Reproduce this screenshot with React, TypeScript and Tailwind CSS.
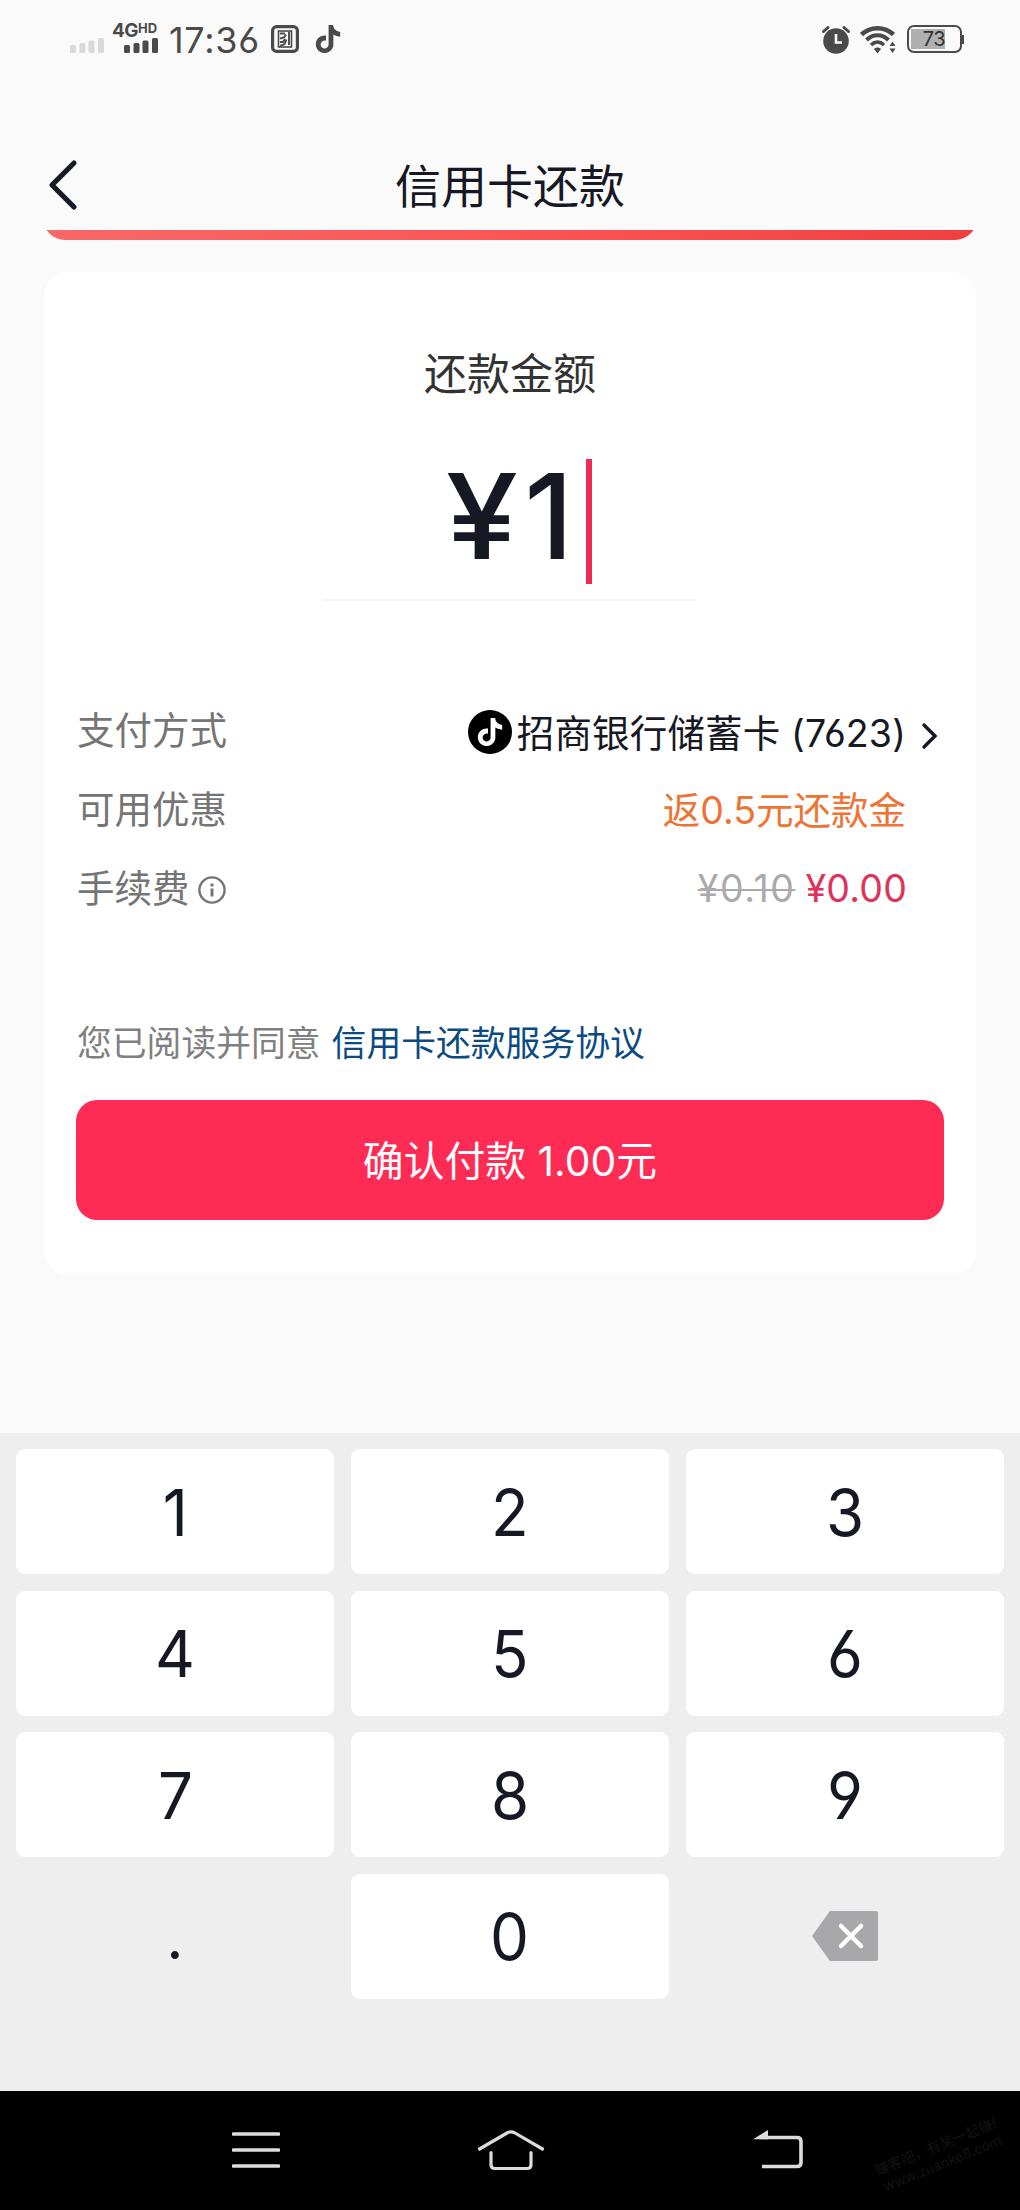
import { useState } from 'react';
import type { ReactNode } from 'react';

const DIGIT_KEYS = ['1', '2', '3', '4', '5', '6', '7', '8', '9'];

const NOTE_PATH =
  'M12.525.02c1.31-.02 2.61-.01 3.91-.02.08 1.53.63 3.09 1.75 4.17 1.12 1.11 2.7 1.62 4.24 1.79v4.03c-1.44-.05-2.89-.35-4.2-.97-.57-.26-1.1-.59-1.62-.93-.01 2.92.01 5.84-.02 8.75-.08 1.4-.54 2.79-1.35 3.94-1.31 1.92-3.58 3.17-5.91 3.21-1.43.08-2.86-.31-4.08-1.03-2.02-1.19-3.44-3.37-3.65-5.71-.02-.5-.03-1-.01-1.49.18-1.9 1.12-3.72 2.58-4.96 1.66-1.44 3.98-2.13 6.15-1.72.02 1.48-.04 2.96-.04 4.44-.99-.32-2.15-.23-3.02.37-.63.41-1.11 1.04-1.36 1.75-.21.51-.15 1.07-.14 1.61.24 1.64 1.82 3.02 3.5 2.87 1.12-.01 2.19-.66 2.77-1.61.19-.33.4-.67.41-1.06.1-1.79.06-3.57.07-5.36.01-4.03-.01-8.05.02-12.07z';

function SignalBars({ className }: { className?: string }) {
  return (
    <svg className={className} width="34" height="15" viewBox="0 0 34 15" fill="currentColor">
      <rect x="0" y="7" width="6" height="8" rx="1.5" />
      <rect x="9.5" y="5" width="6" height="10" rx="1.5" />
      <rect x="18.5" y="2.5" width="6" height="12.5" rx="1.5" />
      <rect x="28" y="0" width="6" height="15" rx="1.5" />
    </svg>
  );
}

function StatusBar() {
  return (
    <div className="flex h-20 items-start justify-between pl-[70px] pr-[56px] text-[#4a4a4a]">
      <div className="flex items-start">
        <SignalBars className="mt-[38px] text-[#d9d9d9]" />
        <div className="ml-2 flex w-[46px] flex-col items-end pt-[23px]">
          <div className="flex h-[15px] w-full items-start font-bold leading-none">
            <span className="text-[19px] leading-[15px] tracking-[-0.5px]">4G</span>
            <span className="text-[13px] leading-[11px]">HD</span>
          </div>
          <SignalBars />
        </div>
        <span className="ml-[11px] mt-[20px] w-[91px] whitespace-nowrap text-[36px] leading-[40px] tracking-[0.7px]">
          17:36
        </span>
        <svg className="ml-[11px] mt-[25px]" width="28" height="28" viewBox="0 0 28 28" fill="none">
          <rect x="1.6" y="1.6" width="24.8" height="24.8" rx="4" stroke="currentColor" strokeWidth="3.2" />
          <rect x="7.5" y="6" width="13" height="16" stroke="currentColor" strokeWidth="1.6" />
          <path d="M9 8.5h5M18 7v13M9 13.5l4-1 2-3M9 17h3l2-3M9 20.5c4 0 6-2 6-6" stroke="currentColor" strokeWidth="1.9" />
        </svg>
        <svg className="ml-[15px] mt-[25px]" width="28" height="28" viewBox="0 0 24 24" fill="currentColor">
          <path d={NOTE_PATH} />
        </svg>
      </div>

      <div className="flex items-start pt-[25px]">
        <svg width="28" height="29" viewBox="0 0 28 29" fill="none">
          <circle cx="14" cy="16" r="12.8" fill="currentColor" />
          <path d="M1.5 6.5 6 2.5M26.5 6.5 22 2.5" stroke="currentColor" strokeWidth="3" strokeLinecap="round" />
          <path d="M14 9v8.5h6" stroke="#fafafa" strokeWidth="2.6" />
        </svg>
        <svg className="ml-[10px]" width="37" height="29" viewBox="0 0 37 29" fill="none" stroke="currentColor">
          <path d="M1.5 9.5C10.5 1 24.5 1 33.5 9.5" strokeWidth="4.5" />
          <path d="M6.5 15C13 8.5 22 8.5 28.5 15" strokeWidth="4" />
          <path d="M11 20c4-3.8 9-3.8 13 0" strokeWidth="3.6" />
          <path d="M14 24c2-2 5-2 7 0l-3.5 4.5z" fill="currentColor" stroke="none" />
          <path d="M29.5 21l3-4.5 3 4.5zM29.5 23.5l3 4.5 3-4.5z" fill="currentColor" stroke="none" />
        </svg>
        <div className="ml-[10px] flex items-center">
          <div className="flex h-7 w-[55px] items-center rounded-[7px] border-[2.5px] border-current p-[2px]">
            <div className="flex h-full w-[34px] items-center justify-end bg-[#b0b0b0] text-[20px] leading-none tracking-[-0.5px] text-[#333]">
              73
            </div>
          </div>
          <div className="h-[9px] w-[2px] bg-current" />
        </div>
      </div>
    </div>
  );
}

function DetailRow({ label, children }: { label: ReactNode; children: ReactNode }) {
  return (
    <div className="flex h-[79px] items-center justify-between">
      <div className="flex items-center pl-px text-[37.5px] text-[#757575]">{label}</div>
      <div className="flex items-center text-[37.5px]">{children}</div>
    </div>
  );
}

function Key({ label, onPress }: { label: string; onPress: (key: string) => void }) {
  return (
    <button
      onClick={() => onPress(label)}
      className="flex h-[125px] items-center justify-center rounded-[9px] bg-white pt-[1px] text-[65px] leading-none"
    >
      <span className="scale-x-95">{label}</span>
    </button>
  );
}

function Keypad({ onPress, onDelete }: { onPress: (key: string) => void; onDelete: () => void }) {
  return (
    <div className="h-[658px] bg-[#eeeeee] px-4 pt-4 text-[#161823]">
      <div className="grid grid-cols-3 gap-x-[17px] gap-y-[16.6px]">
        {DIGIT_KEYS.map((key) => (
          <Key key={key} label={key} onPress={onPress} />
        ))}
        <button onClick={() => onPress('.')} className="flex items-center justify-center pt-[2px] text-[60px] leading-none">
          .
        </button>
        <Key label="0" onPress={onPress} />
        <button onClick={onDelete} className="flex items-center justify-center">
          <svg width="66" height="50" viewBox="0 0 66 50" fill="none">
            <path d="M18 0h46a2 2 0 0 1 2 2v46a2 2 0 0 1-2 2H18L0 25z" fill="#a8a8aa" />
            <path d="M29 15l20 20M49 15L29 35" stroke="#fff" strokeWidth="4.5" strokeLinecap="round" />
          </svg>
        </button>
      </div>
    </div>
  );
}

function NavBar() {
  return (
    <div className="relative h-[119px] bg-black text-[#dcdcdc]">
      <div className="flex items-start pl-[232px] pt-[38px]">
        <svg width="48" height="42" viewBox="0 0 48 42" stroke="currentColor" strokeWidth="3.6" strokeLinecap="round">
          <path d="M1.5 5h45M1.5 21h45M1.5 37h45" />
        </svg>
        <svg
          className="ml-[197px]"
          width="68"
          height="42"
          viewBox="0 0 68 42"
          fill="none"
          stroke="currentColor"
          strokeWidth="3.2"
          strokeLinecap="round"
          strokeLinejoin="round"
        >
          <path d="M2.5 20 30 4q4-2.4 8 0L65.5 20" />
          <path d="M14 23.5V36q0 3.5 4 3.5h32q4 0 4-3.5V23.5" />
        </svg>
        <svg className="ml-[208px]" width="50" height="42" viewBox="0 0 50 42" fill="none">
          <path d="M8 8.5h36q4 0 4 4v21q0 4-4 4H9" stroke="currentColor" strokeWidth="3.6" />
          <path d="M0 10.3 15 1v9.3z" fill="currentColor" />
        </svg>
      </div>
      {/* Watermark */}
      <div className="absolute right-[16px] top-[46px] -rotate-[22deg] whitespace-pre-line text-center text-[14px] leading-[18px] text-[#131313]">
        {'赚客吧，有奖一起赚!\nwww.zuanke8.com'}
      </div>
    </div>
  );
}

export default function App() {
  const [amount, setAmount] = useState('1');

  const handlePress = (key: string) => {
    if (key === '.' && amount.includes('.')) return;
    setAmount((prev) => prev + key);
  };

  return (
    <div className="h-[2210px] w-[1020px] overflow-hidden bg-[#fafafa] font-['Inter','Noto_Sans_CJK_SC',sans-serif] text-[#161823] [font-feature-settings:'cv03','cv04']">
      <StatusBar />

      {/* Title */}
      <header className="grid h-[150px] grid-cols-[1fr_auto_1fr] items-center pt-[62px] pl-[47px] pr-[47px]">
        <svg className="mt-[-3px]" width="32" height="52" viewBox="0 0 32 52" fill="none">
          <path d="M27 4 5 26l22 22" stroke="currentColor" strokeWidth="5.2" strokeLinecap="round" strokeLinejoin="round" />
        </svg>
        <h1 className="text-[46px] leading-[60px]">信用卡还款</h1>
      </header>

      {/* Bottom edge of the scrolled banner */}
      <div className="mx-[43px] h-[10px] overflow-hidden">
        <div className="mt-[-40px] h-[50px] rounded-b-[22px] bg-gradient-to-r from-[#f66868] via-[#fc5555] to-[#ee4040]" />
      </div>

      <main className="mx-[44px] mt-8 h-[1002px] rounded-[24px] bg-white px-[32px] pt-[70px]">
        <h2 className="text-center text-[43px] leading-[64px] text-[#333]">还款金额</h2>
        <div className="mx-auto mt-[53px] flex h-[142px] w-[374px] justify-center border-b-2 border-[#f3f3f3]">
          <div className="flex h-[125px] items-center pl-[21px] text-[118px] font-medium leading-none">
            <span className="mb-[12px] inline-block scale-x-[1.1]">¥</span>
            <span className="mb-[12px] ml-[10px]">{amount}</span>
            <span className="ml-[13px] h-[125px] w-[6px] bg-[#ee2b58]" />
          </div>
        </div>

        <div className="mt-[91px]">
          <DetailRow label="支付方式">
            <span className="flex size-11 items-center justify-center rounded-full bg-black text-white">
              <svg width="28" height="28" viewBox="0 0 24 24" fill="currentColor">
                <path d={NOTE_PATH} />
              </svg>
            </span>
            <span className="ml-[5px] mt-[5px] whitespace-nowrap tracking-[0.15px]">招商银行储蓄卡 (7623)</span>
            <svg className="ml-[15px] mr-[5px] mt-[8px]" width="18" height="30" viewBox="0 0 18 30" fill="none">
              <path d="M3 4l11 11L3 26" stroke="currentColor" strokeWidth="3.4" strokeLinecap="round" />
            </svg>
          </DetailRow>
          <DetailRow label="可用优惠">
            <span className="mr-[38px] mt-[2px] text-[#ed7434]">返0.5元还款金</span>
          </DetailRow>
          <DetailRow
            label={
              <>
                手续费
                <svg className="ml-[8px]" width="28" height="28" viewBox="0 0 28 28" fill="none" stroke="currentColor">
                  <circle cx="14" cy="14" r="12.6" strokeWidth="2.4" />
                  <path d="M14 12.5v8" strokeWidth="3" />
                  <path d="M14 7.5v3" strokeWidth="3" />
                </svg>
              </>
            }
          >
            <span className="tracking-[1.6px] text-[#aaaaaa] line-through decoration-2">¥0.10</span>
            <span className="ml-[10px] mr-[37px] tracking-[0.2px] text-[#e0315a]">¥0.00</span>
          </DetailRow>
        </div>

        <p className="mt-[87px] flex h-[54px] items-center gap-[11px] whitespace-nowrap pl-px text-[34.8px] text-[#808080]">
          您已阅读并同意
          <a className="text-[#0b4a82]">信用卡还款服务协议</a>
        </p>
        <button className="mt-[30px] flex h-[120px] w-full items-center justify-center rounded-[21px] bg-[#fe2c55] pt-[3px] text-[40.8px] text-white">
          确认付款 {Number(amount || 0).toFixed(2)}元
        </button>
      </main>

      <div className="h-[159px]" />
      <Keypad onPress={handlePress} onDelete={() => setAmount((prev) => prev.slice(0, -1))} />
      <NavBar />
    </div>
  );
}
